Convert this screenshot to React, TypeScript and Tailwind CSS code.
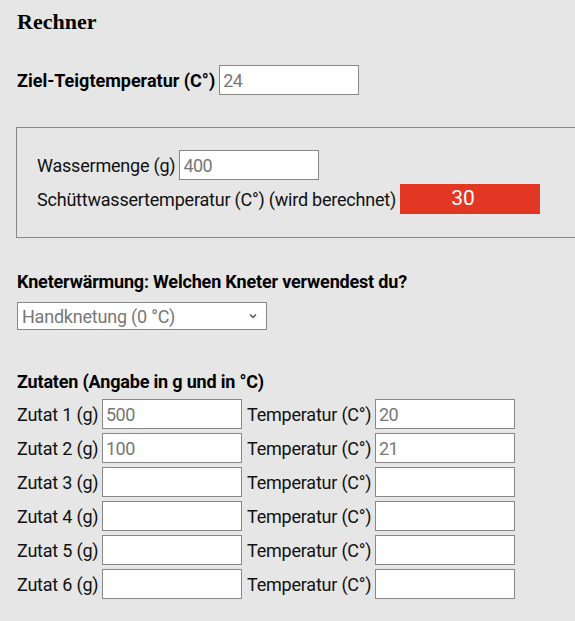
import React from "react";

const font = { fontFamily: "Roboto, 'Liberation Sans', sans-serif" };

function Field({ value, w = "w-[140px]" }: { value?: string; w?: string }) {
  return (
    <input
      readOnly
      value={value ?? ""}
      className={`${w} h-[30px] border border-[#888] bg-white px-[3px] text-[18px] text-[#777] tracking-[-0.03em] outline-none`}
      style={font}
    />
  );
}

export default function App() {
  const rows = [
    ["500", "20"],
    ["100", "21"],
    ["", ""],
    ["", ""],
    ["", ""],
    ["", ""],
  ];
  return (
    <div className="min-h-[621px] w-[575px] overflow-hidden bg-[#e6e6e6] text-[#111]">
      <div className="pl-[17px] pt-[9px]">
        <h1
          className="text-[22px] font-bold leading-[26px] text-black"
          style={{ fontFamily: "'Liberation Serif', serif" }}
        >
          Rechner
        </h1>
        <div className="mt-[30px] flex items-center gap-[4px]" style={font}>
          <span className="text-[18px] font-bold tracking-[0em] text-black">Ziel-Teigtemperatur (C°)</span>
          <Field value="24" />
        </div>
      </div>

      <div className="ml-[16px] mt-[32px] h-[111px] w-[600px] border border-[#888] pl-[20px] pt-[22px]" style={font}>
        <div className="flex items-center gap-[4px]">
          <span className="text-[18px] tracking-[-0.012em]">Wassermenge (g)</span>
          <Field value="400" />
        </div>
        <div className="mt-[4px] flex items-center gap-[4px]">
          <span className="text-[18px] tracking-[-0.012em]">Schüttwassertemperatur (C°) (wird berechnet)</span>
          <div className="flex h-[30px] w-[140px] items-center justify-center bg-[#e23723] pr-[14px] text-[21px] text-white">
            30
          </div>
        </div>
      </div>

      <div className="pl-[17px]" style={font}>
        <div className="mt-[30px] text-[18px] font-bold tracking-[-0.01em] text-black">
          Kneterwärmung: Welchen Kneter verwendest du?
        </div>
        <div className="mt-[7px] flex h-[28px] w-[250px] items-center justify-between border border-[#888] bg-white pl-[4px] pr-[8px]">
          <span className="text-[18px] tracking-[-0.012em] text-[#777]">Handknetung (0 °C)</span>
          <svg width="10" height="10" viewBox="0 0 10 10">
            <path d="M2 3.5 L5 6.5 L8 3.5" stroke="#555" strokeWidth="1.5" fill="none" />
          </svg>
        </div>

        <div className="mt-[38px] text-[18px] font-bold tracking-[-0.01em] text-black">
          Zutaten (Angabe in g und in °C)
        </div>
        <div className="mt-[4px] flex flex-col gap-[4px]">
          {rows.map((r, i) => (
            <div key={i} className="flex items-center">
              <span className="w-[85px] text-[18px] tracking-[-0.012em]">Zutat {i + 1} (g)</span>
              <Field value={r[0]} />
              <span className="ml-[5px] w-[128px] text-[18px] tracking-[-0.012em]">Temperatur (C°)</span>
              <Field value={r[1]} />
            </div>
          ))}
        </div>
      </div>
    </div>
  );
}
